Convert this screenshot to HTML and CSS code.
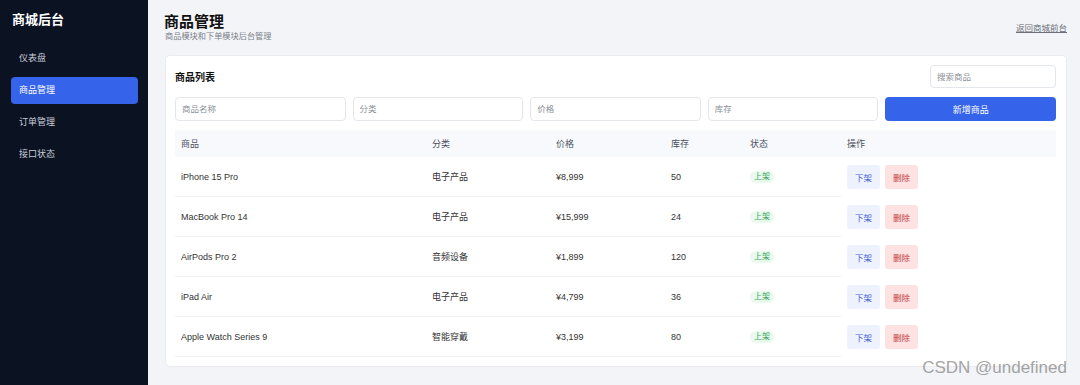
FILE: index.html
```html
<!DOCTYPE html>
<html lang="zh-CN">
<head>
    <meta charset="UTF-8">
    <meta name="viewport" content="width=device-width, initial-scale=1.0">
    <title>商城后台 - 商品管理</title>
    <link rel="stylesheet" href="styles.css">
</head>
<body>
    <div class="layout">
        <aside class="sidebar">
            <h1 class="brand">商城后台</h1>
            <nav class="menu">
                <a href="#" class="menu-item">仪表盘</a>
                <a href="#" class="menu-item active">商品管理</a>
                <a href="#" class="menu-item">订单管理</a>
                <a href="#" class="menu-item">接口状态</a>
            </nav>
        </aside>

        <main class="main">
            <div class="page-head">
                <div>
                    <h2 class="page-title">商品管理</h2>
                    <p class="page-sub">商品模块和下单模块后台管理</p>
                </div>
                <a href="#" class="back-link">返回商城前台</a>
            </div>

            <section class="card">
                <div class="card-head">
                    <h3 class="card-title">商品列表</h3>
                    <input class="input search" type="text" placeholder="搜索商品">
                </div>

                <div class="form-row">
                    <input class="input" type="text" placeholder="商品名称">
                    <input class="input" type="text" placeholder="分类">
                    <input class="input" type="text" placeholder="价格">
                    <input class="input" type="text" placeholder="库存">
                    <button class="btn-primary">新增商品</button>
                </div>

                <table class="goods">
                    <colgroup>
                        <col class="c-name">
                        <col class="c-cat">
                        <col class="c-price">
                        <col class="c-stock">
                        <col class="c-status">
                        <col>
                    </colgroup>
                    <thead>
                        <tr>
                            <th>商品</th>
                            <th>分类</th>
                            <th>价格</th>
                            <th>库存</th>
                            <th>状态</th>
                            <th>操作</th>
                        </tr>
                    </thead>
                    <tbody>
                        <tr>
                            <td>iPhone 15 Pro</td>
                            <td>电子产品</td>
                            <td>¥8,999</td>
                            <td>50</td>
                            <td><span class="tag">上架</span></td>
                            <td class="ops"><button class="btn-sm off">下架</button><button class="btn-sm del">删除</button></td>
                        </tr>
                        <tr>
                            <td>MacBook Pro 14</td>
                            <td>电子产品</td>
                            <td>¥15,999</td>
                            <td>24</td>
                            <td><span class="tag">上架</span></td>
                            <td class="ops"><button class="btn-sm off">下架</button><button class="btn-sm del">删除</button></td>
                        </tr>
                        <tr>
                            <td>AirPods Pro 2</td>
                            <td>音频设备</td>
                            <td>¥1,899</td>
                            <td>120</td>
                            <td><span class="tag">上架</span></td>
                            <td class="ops"><button class="btn-sm off">下架</button><button class="btn-sm del">删除</button></td>
                        </tr>
                        <tr>
                            <td>iPad Air</td>
                            <td>电子产品</td>
                            <td>¥4,799</td>
                            <td>36</td>
                            <td><span class="tag">上架</span></td>
                            <td class="ops"><button class="btn-sm off">下架</button><button class="btn-sm del">删除</button></td>
                        </tr>
                        <tr>
                            <td>Apple Watch Series 9</td>
                            <td>智能穿戴</td>
                            <td>¥3,199</td>
                            <td>80</td>
                            <td><span class="tag">上架</span></td>
                            <td class="ops"><button class="btn-sm off">下架</button><button class="btn-sm del">删除</button></td>
                        </tr>
                    </tbody>
                </table>
            </section>
        </main>
    </div>
    <div class="watermark">CSDN @undefined</div>
</body>
</html>
```

FILE: styles.css
```css
body {
    margin: 0;
    padding: 0;
    font-family: "Liberation Sans", "Noto Sans CJK SC", sans-serif;
    background-color: #f3f4f8;
    color: #222;
}

.layout {
    display: flex;
    min-height: 385px;
}

.sidebar {
    width: 148px;
    flex-shrink: 0;
    background-color: #0b1222;
    padding: 12px 10px 0 11px;
    box-sizing: border-box;
}

.brand {
    margin: 0 0 17px 1px;
    font-size: 13px;
    line-height: 16px;
    font-weight: bold;
    color: #fff;
}

.menu {
    display: flex;
    flex-direction: column;
    gap: 5px;
}

.menu-item {
    display: block;
    height: 27px;
    line-height: 27px;
    padding-left: 8px;
    font-size: 9px;
    color: #c9ced8;
    text-decoration: none;
    border-radius: 4px;
}

.menu-item.active {
    background-color: #3563e9;
    color: #fff;
}

.main {
    flex: 1;
    padding: 12px 13px 0 17px;
    box-sizing: border-box;
}

.page-head {
    display: flex;
    justify-content: space-between;
    align-items: center;
    margin-bottom: 13px;
}

.page-title {
    margin: 0 0 0 -1px;
    font-size: 15px;
    line-height: 19px;
    font-weight: bold;
    color: #111;
}

.page-sub {
    margin: 0;
    font-size: 8.2px;
    line-height: 11px;
    color: #7a808a;
}

.back-link {
    font-size: 8.5px;
    color: #6b7079;
    text-decoration: underline;
}

.card {
    background: #fff;
    border: 1px solid #e9ebef;
    border-radius: 5px;
    padding: 9px 10px 9px 9px;
}

.card-head {
    display: flex;
    justify-content: space-between;
    align-items: center;
    margin-bottom: 9px;
}

.card-title {
    margin: 0;
    font-size: 10px;
    font-weight: bold;
    color: #111;
}

.input {
    box-sizing: border-box;
    height: 24px;
    border: 1px solid #e3e6eb;
    border-radius: 4px;
    padding: 0 6px;
    font-family: inherit;
    font-size: 8.5px;
    color: #222;
    background: #fff;
    outline: none;
}

.input::placeholder {
    color: #8a8f98;
}

.search {
    width: 126px;
    height: 23px;
}

.form-row {
    display: grid;
    grid-template-columns: repeat(5, 1fr);
    gap: 7px;
    margin-bottom: 9px;
}

.form-row .input {
    width: 100%;
}

.btn-primary {
    height: 24px;
    border: none;
    border-radius: 4px;
    background-color: #3563e9;
    color: #fff;
    font-family: inherit;
    font-size: 9px;
}

.goods {
    width: 100%;
    border-collapse: collapse;
    table-layout: fixed;
    font-size: 9px;
}

.c-name { width: 251px; }
.c-cat { width: 124px; }
.c-price { width: 115px; }
.c-stock { width: 79px; }
.c-status { width: 97px; }

.goods th {
    height: 27px;
    padding: 0 6px;
    text-align: left;
    font-weight: normal;
    color: #4b5160;
    background-color: #f8f9fd;
}

.goods td {
    height: 39px;
    padding: 0 6px;
    color: #333;
    border-bottom: 1px solid #f0f1f4;
}

.goods td.ops {
    border-bottom: none;
    line-height: 0;
}

.tag {
    display: inline-block;
    height: 12px;
    line-height: 12px;
    padding: 0 4px;
    border-radius: 6px;
    background-color: #e9f9ee;
    color: #3aa35f;
    font-size: 8px;
}

.btn-sm {
    height: 24px;
    padding: 0 8px;
    margin-right: 5px;
    border: none;
    border-radius: 3px;
    vertical-align: middle;
    font-family: inherit;
    font-size: 8.5px;
}

.btn-sm.off {
    background-color: #eef2ff;
    color: #4a5fd6;
}

.btn-sm.del {
    background-color: #fee2e2;
    color: #c2413b;
}

.watermark {
    position: absolute;
    right: 13px;
    top: 358px;
    font-size: 17px;
    color: rgba(140, 140, 140, 0.8);
}
```
